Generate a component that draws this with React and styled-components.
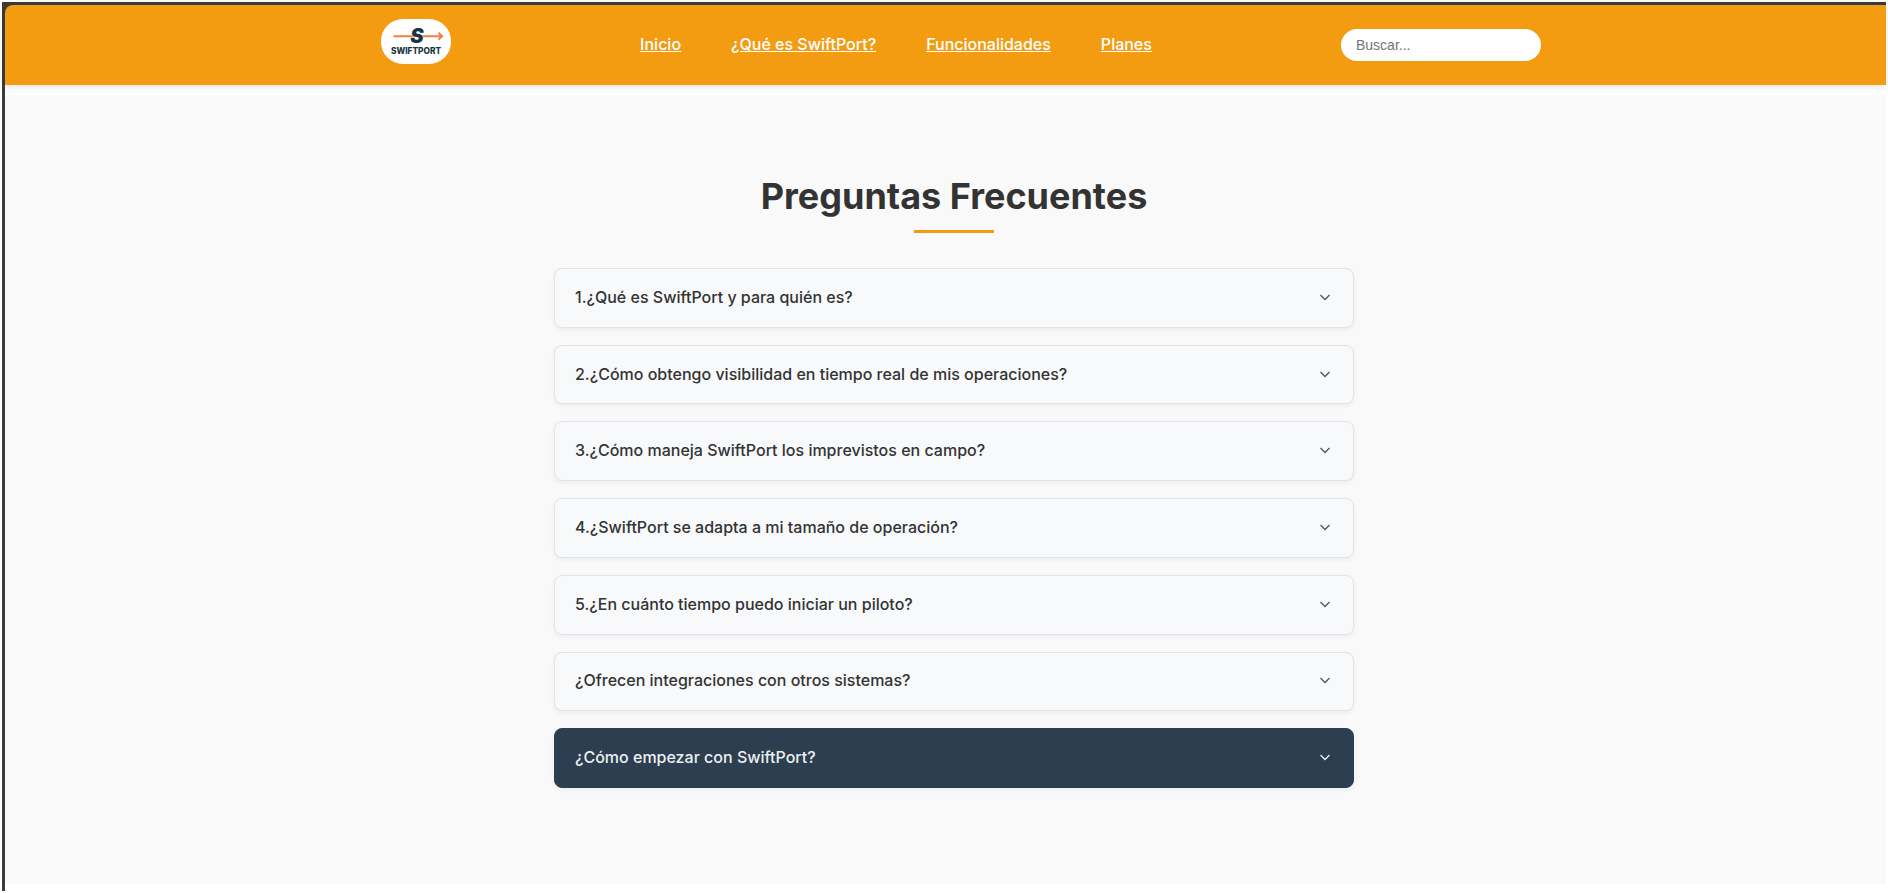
import React, { useState } from "react";
import styled, { createGlobalStyle } from "styled-components";

const GlobalStyle = createGlobalStyle`
  *, *::before, *::after { box-sizing: border-box; }
  body {
    margin: 0;
    background: #fff;
    color: #333;
    font-family: Inter, "Liberation Sans", sans-serif;
    font-size: 16px;
    line-height: 24px;
  }
`;

const Frame = styled.div`
  display: flex;
  flex-direction: column;
  min-height: calc(100vh - 4px);
  margin: 2px;
  border: solid #3b3b3b;
  border-width: 3px 0 0 3px;
  background: #3b3b3b;
`;

const Header = styled.header`
  position: relative;
  height: 80px;
  padding-left: 31px;
  border-top-left-radius: 8px;
  background: #f39c12;
  box-shadow: 0 2px 10px rgba(0, 0, 0, 0.1);
`;

const HeaderInner = styled.div`
  display: flex;
  align-items: center;
  justify-content: space-between;
  max-width: 1200px;
  height: 100%;
  margin: 0 auto;
  padding: 0 20px;
`;

const LogoLink = styled.a`
  display: block;
  padding-bottom: 7px;

  svg {
    display: block;
    width: 70px;
    height: 45px;
  }
`;

const Nav = styled.nav`
  display: flex;
  gap: 50px;
  padding-bottom: 2px;
`;

const NavLink = styled.a`
  color: #fff;
  font-weight: 500;
  text-decoration: underline;
`;

const Search = styled.input`
  width: 200px;
  height: 32px;
  padding: 0 15px;
  border: 0;
  border-radius: 20px;
  background: #fff;
  color: #333;
  font-family: "Liberation Sans", Arial, sans-serif;
  font-size: 14px;

  &::placeholder {
    color: #757575;
    opacity: 1;
  }
`;

const Main = styled.main`
  display: flex;
  flex: 1;
  flex-direction: column;
  padding: 10px 0 7px;
  background: #fff;
`;

const FaqSection = styled.section`
  flex: 1;
  padding: 80px 0 80px 17px;
  background: #f9f9f9;
`;

const FaqInner = styled.div`
  max-width: 800px;
  margin: 0 auto;
`;

const Title = styled.h2`
  display: flex;
  flex-direction: column;
  align-items: center;
  gap: 12px;
  margin: 0 0 35px;
  font-size: 36px;
  line-height: 43px;
  font-weight: 700;

  &::after {
    content: "";
    width: 80px;
    height: 3px;
    background: #f39c12;
  }
`;

const FaqList = styled.div`
  display: grid;
  grid-auto-rows: 1fr;
  gap: 17px;
  min-height: 520px;
`;

const Question = styled.button`
  display: flex;
  align-items: center;
  justify-content: space-between;
  width: 100%;
  padding: 15px 20px 17px;
  border: 1px solid ${(p) => (p.$highlight ? "#2c3e50" : "#e0e3e7")};
  border-radius: 8px;
  background: ${(p) => (p.$highlight ? "#2c3e50" : "#f8f9fb")};
  box-shadow: 0 2px 5px rgba(0, 0, 0, 0.05);
  color: ${(p) => (p.$highlight ? "#ecf0f1" : "#333")};
  font: inherit;
  font-weight: 500;
  text-align: left;
  cursor: pointer;
`;

const Chevron = styled.svg`
  flex: none;
  width: 16px;
  height: 16px;
  fill: none;
  stroke: ${(p) => (p.$highlight ? "#ecf0f1" : "#555")};
  stroke-width: 1.3;
  transform: ${(p) => (p.$open ? "rotate(180deg)" : "none")};
`;

const links = [
  { label: "Inicio", href: "#inicio" },
  { label: "¿Qué es SwiftPort?", href: "#que-es" },
  { label: "Funcionalidades", href: "#funcionalidades" },
  { label: "Planes", href: "#planes" },
];

const questions = [
  { text: "1.¿Qué es SwiftPort y para quién es?" },
  { text: "2.¿Cómo obtengo visibilidad en tiempo real de mis operaciones?" },
  { text: "3.¿Cómo maneja SwiftPort los imprevistos en campo?" },
  { text: "4.¿SwiftPort se adapta a mi tamaño de operación?" },
  { text: "5.¿En cuánto tiempo puedo iniciar un piloto?" },
  { text: "¿Ofrecen integraciones con otros sistemas?" },
  { text: "¿Cómo empezar con SwiftPort?", highlight: true },
];

function Logo() {
  return (
    <svg viewBox="0 0 70 45" role="img" aria-label="SwiftPort">
      <rect width="70" height="45" rx="22" fill="#fff" />
      <path d="M12.500 17.200H60" stroke="#f47c3c" strokeWidth="1.900" />
      <path d="M57.500 13.800L61 17.200L57.500 20.600" fill="none" stroke="#f47c3c" strokeWidth="2" />
      <text
        x="36"
        y="24.300"
        textAnchor="middle"
        fontFamily="Inter"
        fontSize="20"
        fontWeight="900"
        fontStyle="italic"
        fill="#1b3442"
        stroke="#fff"
        strokeWidth="1"
        paintOrder="stroke"
      >
        S
      </text>
      <text x="35" y="34.700" textAnchor="middle" fontFamily="Inter" fontSize="8.300" fontWeight="800" fill="#1b3442">
        SWIFTPORT
      </text>
    </svg>
  );
}

export default function App() {
  const [openIndex, setOpenIndex] = useState(null);

  return (
    <>
      <GlobalStyle />
      <Frame>
        <Header>
          <HeaderInner>
            <LogoLink href="#inicio">
              <Logo />
            </LogoLink>
            <Nav>
              {links.map((link) => (
                <NavLink key={link.href} href={link.href}>
                  {link.label}
                </NavLink>
              ))}
            </Nav>
            <Search type="text" placeholder="Buscar..." aria-label="Buscar" />
          </HeaderInner>
        </Header>
        <Main>
          <FaqSection>
            <FaqInner>
              <Title>Preguntas Frecuentes</Title>
              <FaqList>
                {questions.map((q, i) => (
                  <Question
                    key={q.text}
                    type="button"
                    $highlight={q.highlight}
                    aria-expanded={openIndex === i}
                    onClick={() => setOpenIndex(openIndex === i ? null : i)}
                  >
                    {q.text}
                    <Chevron viewBox="0 0 16 16" aria-hidden="true" $highlight={q.highlight} $open={openIndex === i}>
                      <path d="M3.500 6L8 10.500L12.500 6" />
                    </Chevron>
                  </Question>
                ))}
              </FaqList>
            </FaqInner>
          </FaqSection>
        </Main>
      </Frame>
    </>
  );
}
